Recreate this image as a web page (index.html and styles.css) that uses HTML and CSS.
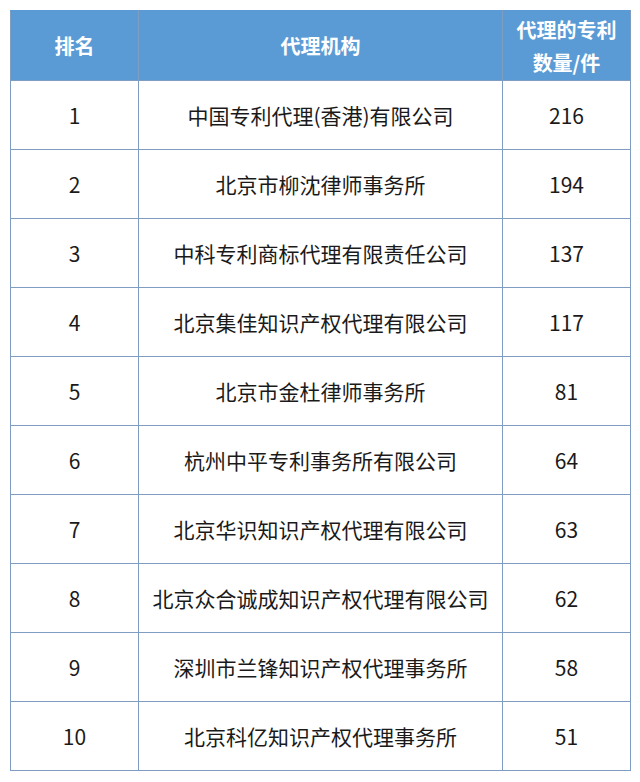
FILE: index.html
```html
<!DOCTYPE html>
<html lang="zh">
<head>
<meta charset="utf-8">
<link rel="stylesheet" href="styles.css">
</head>
<body>
<table class="rank">
  <colgroup>
    <col class="c1"><col class="c2"><col class="c3">
  </colgroup>
  <thead>
    <tr><th>排名</th><th>代理机构</th><th class="two">代理的专利<br>数量/件</th></tr>
  </thead>
  <tbody>
    <tr><td>1</td><td>中国专利代理(香港)有限公司</td><td>216</td></tr>
    <tr><td>2</td><td>北京市柳沈律师事务所</td><td>194</td></tr>
    <tr><td>3</td><td>中科专利商标代理有限责任公司</td><td>137</td></tr>
    <tr><td>4</td><td>北京集佳知识产权代理有限公司</td><td>117</td></tr>
    <tr><td>5</td><td>北京市金杜律师事务所</td><td>81</td></tr>
    <tr><td>6</td><td>杭州中平专利事务所有限公司</td><td>64</td></tr>
    <tr><td>7</td><td>北京华识知识产权代理有限公司</td><td>63</td></tr>
    <tr><td>8</td><td>北京众合诚成知识产权代理有限公司</td><td>62</td></tr>
    <tr><td>9</td><td>深圳市兰锋知识产权代理事务所</td><td>58</td></tr>
    <tr><td>10</td><td>北京科亿知识产权代理事务所</td><td>51</td></tr>
  </tbody>
</table>
</body>
</html>
```

FILE: styles.css
```css
html, body {
  margin: 0;
  padding: 0;
  background: #ffffff;
}
body {
  padding: 10px 0 0 10px;
  font-family: "Noto Sans CJK SC", "Noto Sans", sans-serif;
}
.rank {
  border-collapse: collapse;
  width: 620px;
  table-layout: fixed;
  color: #1a1a1a;
}
.c1 { width: 128px; }
.c2 { width: 364px; }
.c3 { width: 128px; }
.rank th {
  background: #5b9bd5;
  color: #ffffff;
  font-weight: bold;
  font-size: 20px;
  height: 69px;
  padding: 0;
  text-align: center;
  vertical-align: middle;
  border: 1px solid #7e9dc0;
  border-top-color: #5b9bd5;
  line-height: 33px;
}
.rank td {
  height: 68px;
  padding: 0;
  font-size: 21px;
  text-align: center;
  vertical-align: middle;
  border: 1px solid #7e9dc0;
  line-height: 1;
}
```
